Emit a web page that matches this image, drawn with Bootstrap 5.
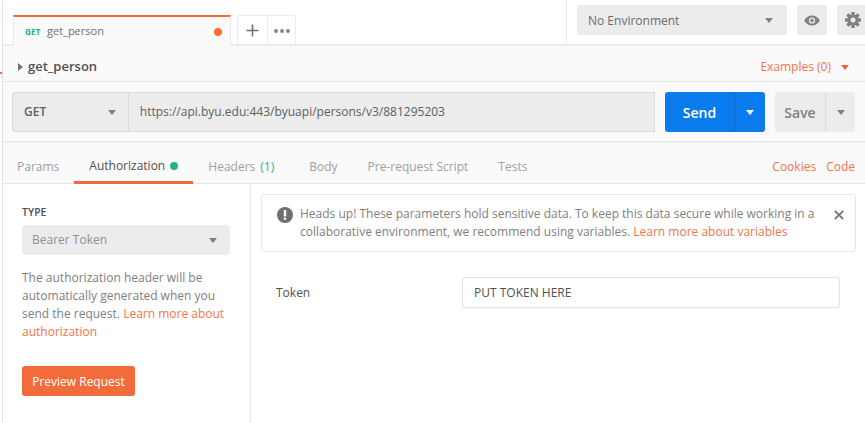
<!DOCTYPE html>
<html lang="en">
<head>
<meta charset="utf-8">
<title>get_person</title>
<link href="https://cdn.jsdelivr.net/npm/bootstrap@5.3.0/dist/css/bootstrap.min.css" rel="stylesheet">
<style>
html,body{height:423px;overflow:hidden}
body{font-family:"Open Sans",sans-serif;font-size:12px;color:#808080;background:#fff}
.pm-app{height:423px;position:relative;border-left:1px solid #e2e2e2;margin-left:2px;width:863px}
.pm-mark{position:absolute;left:-3px;top:72px;width:2px;height:2px;background:#f26b3a}
.pm-top{height:46px;border-bottom:2px solid #ececec;background:#fff}
.pm-tab{width:218px;margin-left:10px;margin-top:15px;height:31px;border:1px solid #e8e8e8;border-top:2px solid #f26b3a;border-bottom:0;background:#fafafa;margin-bottom:-2px;padding:0 8px 0 11px;z-index:1}
.pm-get{font-size:8px;font-weight:700;color:#26b47f;width:22px;letter-spacing:.2px}
.pm-tabname{font-size:11px;color:#707070}
.pm-dot{width:8px;height:8px;border-radius:50%;background:#f6702a}
.pm-tool{margin-left:6px;margin-top:15px;height:30px;border:1px solid #ececec;border-bottom:0;border-radius:3px 3px 0 0;width:59px}
.pm-tool>div{width:30px}
.pm-tool>div+div{border-left:1px solid #ececec;width:28px}
.pm-env{width:299px;height:44px;border-left:1px solid #ececec;padding:5px 0 0 10px;margin-left:auto;gap:10px}
.pm-envsel{width:210px;height:30px;background:#ececec;border-radius:3px;padding:1px 14px 0 11px;font-size:12px;color:#6b6b6b}
.pm-iconbtn{width:30px;height:30px;background:#ececec;border-radius:3px}
.pm-gear{width:28px;border-radius:3px 0 0 3px}
.pm-name{height:36px;background:#fafafa;border-bottom:1px solid #e6e6e6;padding:7px 16px 0 15px}
.pm-title{font-size:13px;font-weight:600;color:#505050;margin-left:5px}
.pm-link{color:#f4744a}
.pm-tri{width:0;height:0;border-left:4.5px solid transparent;border-right:4.5px solid transparent;border-top:5px solid #808080;display:inline-block}
.pm-tri-o{border-top-color:#f4623a;margin-left:10px}
.pm-tri-w{border-top-color:#fff}
.pm-rtri{width:0;height:0;border-top:4.5px solid transparent;border-bottom:4.5px solid transparent;border-left:5px solid #707070}
.pm-req{height:61px;background:#fafafa;border-bottom:2px solid #ececec;padding:10px 10px 0 9px}
.pm-method{width:117px;height:40px;background:#ececec;border:1px solid #d9d9d9;border-radius:3px 0 0 3px;padding:0 12px 0 11px;font-weight:600;color:#606060}
.pm-url{width:527px;height:40px;background:#ececec;border:1px solid #d9d9d9;border-left:0;padding-left:11px;color:#606060}
.pm-send{width:100px;height:40px;margin-left:10px;background:#097bed;border-radius:3px;color:#fff;font-size:14px;font-weight:600}
.pm-send>div:first-child{width:69px}
.pm-send>div:last-child{width:31px;border-left:1px solid #0a6cd0}
.pm-save{width:80px;height:40px;margin-left:10px;background:#ececec;border-radius:3px;color:#808080;font-size:14px;font-weight:600}
.pm-save>div:first-child{width:50px}
.pm-save>div:last-child{width:30px;border-left:1px solid #d9d9d9}
.pm-tabs{height:41px;background:#fafafa;border-bottom:1px solid #e6e6e6;padding:0 10px 0 14px}
.pm-t{height:40px;padding-top:7px;color:#a0a0a0;margin-right:30px}
.pm-first{margin-right:15px}
.pm-t.pm-active{color:#505050;margin-right:15px;padding:7px 15px 0;border-bottom:3px solid #f26b3a;width:119px;height:41px;white-space:nowrap}
.pm-green{color:#26b47f;margin-left:5px}
.pm-hdr{margin-right:35px}
.pm-gdot{width:8px;height:8px;border-radius:50%;background:#26b47f;margin-left:5px;flex-shrink:0}
.pm-right{padding-top:7px;gap:10px}
.pm-side{width:248px;border-right:1px solid #e6e6e6;padding:21px 20px 0 19px;height:240px}
.pm-type{font-size:10.5px;font-weight:600;color:#505050;line-height:14px;margin-bottom:6px}
.pm-bearer{width:208px;height:30px;background:#ececec;border-radius:3px;padding:0 13px 0 10px;color:#909090;margin-bottom:14px}
.pm-help{line-height:18px;margin:0 0 25px;color:#808080;width:210px}
.pm-preview{background:#f26b3a;color:#fff;width:113px;height:30px;border-radius:3px;padding-top:1px}
.pm-main{flex:1;padding:10px 10px 0 10px}
.pm-alert{height:58px;border:1px solid #e6e6e6;border-radius:3px;padding:0 11px 0 15px;line-height:18px;color:#808080}
.pm-atext{margin-left:7px;width:534px}
.pm-alert svg.pm-x{margin-left:auto}
.pm-tokenrow{margin-top:25px;padding-left:15px;color:#505050}
.pm-tlabel{width:186px}
.pm-tinput{width:378px;height:31px;border:1px solid #e0e0e0;border-radius:3px;padding-left:11px;color:#505050;display:flex;align-items:center}
</style>
</head>
<body>
<div class="pm-app">
  <span class="pm-mark"></span>
  <div class="pm-top d-flex">
    <div class="pm-tab d-flex align-items-center">
      <span class="pm-get">GET</span><span class="pm-tabname">get_person</span>
      <span class="pm-dot ms-auto"></span>
    </div>
    <div class="pm-tool d-flex">
      <div class="d-flex align-items-center justify-content-center"><svg width="13" height="13" viewBox="0 0 13 13"><path d="M6.5 0.5v12M0.5 6.5h12" stroke="#707070" stroke-width="1.6"/></svg></div>
      <div class="d-flex align-items-center justify-content-center"><svg width="16" height="4" viewBox="0 0 16 4"><circle cx="2" cy="2" r="1.9" fill="#808080"/><circle cx="8" cy="2" r="1.9" fill="#808080"/><circle cx="14" cy="2" r="1.9" fill="#808080"/></svg></div>
    </div>
    <div class="pm-env d-flex">
      <div class="pm-envsel d-flex align-items-center justify-content-between"><span>No Environment</span><span class="pm-tri"></span></div>
      <div class="pm-iconbtn d-flex align-items-center justify-content-center"><svg width="16" height="11" viewBox="0 0 16 11"><path d="M8 .5C4.5.5 1.6 2.6.2 5.5 1.6 8.4 4.5 10.5 8 10.5s6.400-2.100 7.800-5C14.400 2.600 11.500.5 8 .5z" fill="#808080"/><circle cx="8" cy="5.500" r="3.100" fill="#ececec"/><circle cx="8" cy="5.500" r="1.700" fill="#808080"/></svg></div>
      <div class="pm-iconbtn pm-gear d-flex align-items-center"><svg class="ms-2" width="16" height="16" viewBox="0 0 16 16"><g fill="#808080"><circle cx="8" cy="8" r="5.600"/><rect x="6.300" y="0" width="3.400" height="16" rx=".5"/><rect x="6.300" y="0" width="3.400" height="16" rx=".5" transform="rotate(45 8 8)"/><rect x="6.300" y="0" width="3.400" height="16" rx=".5" transform="rotate(90 8 8)"/><rect x="6.300" y="0" width="3.400" height="16" rx=".5" transform="rotate(135 8 8)"/></g><circle cx="8" cy="8" r="2.500" fill="#ececec"/></svg></div>
    </div>
  </div>
  <div class="pm-name d-flex align-items-center">
    <span class="pm-rtri"></span><span class="pm-title">get_person</span>
    <span class="pm-link ms-auto">Examples (0)</span><span class="pm-tri pm-tri-o"></span>
  </div>
  <div class="pm-req d-flex">
    <div class="pm-method d-flex align-items-center justify-content-between"><span>GET</span><span class="pm-tri"></span></div>
    <div class="pm-url d-flex align-items-center">https://api.byu.edu:443/byuapi/persons/v3/881295203</div>
    <div class="pm-send d-flex">
      <div class="d-flex align-items-center justify-content-center">Send</div>
      <div class="d-flex align-items-center justify-content-center"><span class="pm-tri pm-tri-w"></span></div>
    </div>
    <div class="pm-save d-flex">
      <div class="d-flex align-items-center justify-content-center">Save</div>
      <div class="d-flex align-items-center justify-content-center"><span class="pm-tri"></span></div>
    </div>
  </div>
  <div class="pm-tabs d-flex">
    <div class="pm-t pm-first d-flex align-items-center">Params</div>
    <div class="pm-t pm-active d-flex align-items-center">Authorization<span class="pm-gdot"></span></div>
    <div class="pm-t pm-hdr d-flex align-items-center">Headers<span class="pm-green">(1)</span></div>
    <div class="pm-t d-flex align-items-center">Body</div>
    <div class="pm-t d-flex align-items-center">Pre-request Script</div>
    <div class="pm-t d-flex align-items-center">Tests</div>
    <div class="pm-link pm-right ms-auto d-flex align-items-center"><span>Cookies</span><span>Code</span></div>
  </div>
  <div class="d-flex">
    <div class="pm-side">
      <div class="pm-type">TYPE</div>
      <div class="pm-bearer d-flex align-items-center justify-content-between"><span>Bearer Token</span><span class="pm-tri"></span></div>
      <p class="pm-help">The authorization header will be automatically generated when you send the request. <span class="pm-link">Learn more about authorization</span></p>
      <div class="pm-preview d-flex align-items-center justify-content-center">Preview Request</div>
    </div>
    <div class="pm-main">
      <div class="pm-alert d-flex align-items-center">
        <svg width="16" height="16" viewBox="0 0 16 16" class="flex-shrink-0 mb-3"><circle cx="8" cy="8" r="8" fill="#707070"/><rect x="6.800" y="3" width="2.400" height="6.500" rx=".6" fill="#fff"/><circle cx="8" cy="11.700" r="1.300" fill="#fff"/></svg>
        <div class="pm-atext">Heads up! These parameters hold sensitive data. To keep this data secure while working in a collaborative environment, we recommend using variables. <span class="pm-link">Learn more about variables</span></div>
        <svg class="pm-x mb-3 flex-shrink-0" width="10" height="10" viewBox="0 0 10 10"><path d="M.8.8l8.400 8.400M9.200.8L.8 9.200" stroke="#707070" stroke-width="1.700"/></svg>
      </div>
      <div class="pm-tokenrow d-flex align-items-center">
        <div class="pm-tlabel">Token</div>
        <div class="pm-tinput">PUT TOKEN HERE</div>
      </div>
    </div>
  </div>
</div>
<script src="https://cdn.jsdelivr.net/npm/bootstrap@5.3.0/dist/js/bootstrap.bundle.min.js"></script>
</body>
</html>
